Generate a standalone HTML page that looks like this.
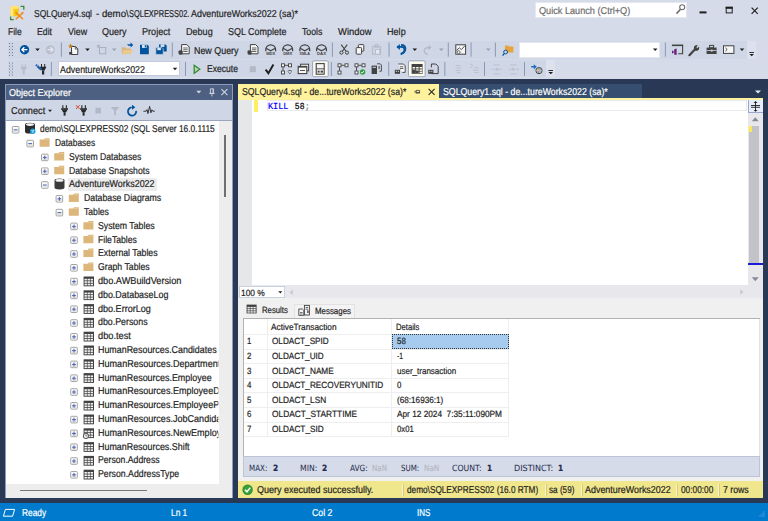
<!DOCTYPE html>
<html lang="en"><head><meta charset="utf-8"><title>SQLQuery4.sql - demo\SQLEXPRESS02.AdventureWorks2022 (sa)* - Microsoft SQL Server Management Studio</title>
<style>
html,body{margin:0;padding:0}
body{width:768px;height:521px;overflow:hidden;background:#293955;position:relative;font-family:"Liberation Sans",sans-serif}
#app{position:absolute;left:0;top:0;width:768px;height:521px;overflow:hidden}
#app div,#app span,#app svg{position:absolute;display:block}
#app span{white-space:pre;line-height:1;transform-origin:0 0;text-rendering:geometricPrecision;-webkit-text-stroke:0.2px}
</style></head>
<body><div id="app">
<div style="left:0px;top:0px;width:768px;height:79px;background:#d6dbe9;"></div>
<div style="left:8px;top:41px;width:739px;height:18px;background:#cfd6e5;"></div>
<div style="left:747px;top:41px;width:9px;height:18px;background:#dde1ee;"></div>
<div style="left:8px;top:60px;width:538px;height:17px;background:#cfd6e5;"></div>
<div style="left:546px;top:60px;width:9px;height:17px;background:#dde1ee;"></div>
<span style="left:34px;top:10px;font-size:10px;color:#1e1e1e;transform:scaleX(0.8483);">SQLQuery4.sql</span>
<span style="left:96px;top:10px;font-size:10px;color:#1e1e1e;transform:scaleX(0.9644);">- demo\</span>
<span style="left:129.4px;top:10px;font-size:10px;color:#1e1e1e;transform:scaleX(0.7442);">SQLEXPRESS02.</span>
<span style="left:190.8px;top:10px;font-size:10px;color:#1e1e1e;transform:scaleX(0.8918);">AdventureWorks2022 (sa)*</span>
<div style="left:535px;top:2px;width:152px;height:16px;background:#fff;box-shadow:inset 0 0 0 1px #e5e8f0"></div>
<span style="left:538.7px;top:7px;font-size:10px;color:#6d6d6d;transform:scaleX(0.9151);">Quick Launch (Ctrl+Q)</span>
<span style="left:8px;top:28px;font-size:10px;color:#1e1e1e;transform:scaleX(0.8496);">File</span>
<span style="left:37px;top:28px;font-size:10px;color:#1e1e1e;transform:scaleX(0.8704);">Edit</span>
<span style="left:67.5px;top:28px;font-size:10px;color:#1e1e1e;transform:scaleX(0.8930);">View</span>
<span style="left:102px;top:28px;font-size:10px;color:#1e1e1e;transform:scaleX(0.8996);">Query</span>
<span style="left:142.2px;top:28px;font-size:10px;color:#1e1e1e;transform:scaleX(0.9092);">Project</span>
<span style="left:185.8px;top:28px;font-size:10px;color:#1e1e1e;transform:scaleX(0.9060);">Debug</span>
<span style="left:228px;top:28px;font-size:10px;color:#1e1e1e;transform:scaleX(0.8970);">SQL Complete</span>
<span style="left:302.3px;top:28px;font-size:10px;color:#1e1e1e;transform:scaleX(0.8733);">Tools</span>
<span style="left:338px;top:28px;font-size:10px;color:#1e1e1e;transform:scaleX(0.9416);">Window</span>
<span style="left:387.3px;top:28px;font-size:10px;color:#1e1e1e;transform:scaleX(0.9087);">Help</span>
<span style="left:193.8px;top:47px;font-size:10px;color:#1e1e1e;transform:scaleX(0.8897);">New Query</span>
<div style="left:58px;top:61px;width:122px;height:15px;background:#fff;box-shadow:inset 0 0 0 1px #c4cbdc"></div>
<span style="left:60.3px;top:66px;font-size:10px;color:#1e1e1e;transform:scaleX(0.8845);">AdventureWorks2022</span>
<span style="left:206.7px;top:65px;font-size:10px;color:#1e1e1e;transform:scaleX(0.8578);">Execute</span>
<div style="left:519px;top:42px;width:141px;height:16px;background:#fff;box-shadow:inset 0 0 0 1px #e5e8f0"></div>
<svg style="left:0;top:0" width="768" height="80" viewBox="0 0 768 80"><path d="M10.4 7.6v7.2a4.2 1.6 0 0 0 8.4 0v-7.2z" fill="#f6c915" /><ellipse cx="14.6" cy="7.4" rx="4.2" ry="1.6" fill="#ffe36a"/><path d="M10.4 7.6v7.2a4.2 1.6 0 0 0 3 1.5v-7.4a4.2 1.6 0 0 1-3-1.3z" fill="#ffe98a" /><path d="M20.6 6.4h3.2v3.4" fill="none" stroke="#388a34" stroke-width="1.3" /><path d="M10.6 16.4v3.2h3.2" fill="none" stroke="#388a34" stroke-width="1.3" /><path d="M15.6 12.4l7.4 6.8M23.2 12.4l-7.4 6.8" fill="none" stroke="#f28a1e" stroke-width="1.5" /><path d="M15 12l2.4 .4-.6 2.2zM23.8 12l-2.4 .4.6 2.2z" fill="#f28a1e" /><rect x="699.5" y="11.4" width="7" height="2" fill="#1e1e1e" /><rect x="726.2" y="7.3" width="6" height="5.6" fill="none" stroke="#1e1e1e" stroke-width="1" /><rect x="725.7" y="6.8" width="7" height="2" fill="#1e1e1e" /><path d="M751.6 7.6l6.2 6.2M757.8 7.6l-6.2 6.2" fill="none" stroke="#1e1e1e" stroke-width="1.2" /><circle cx="682.2" cy="7.3" r="2.5" fill="none" stroke="#6d6d6d" stroke-width="1.1"/><path d="M680.5 9.3l-4 4.3" fill="none" stroke="#6d6d6d" stroke-width="1.6" /><rect x="9" y="43" width="1" height="1" fill="#6f7b99" /><rect x="12" y="43" width="1" height="1" fill="#6f7b99" /><rect x="10.5" y="44.5" width="1" height="1" fill="#aab3c9" /><rect x="9" y="46" width="1" height="1" fill="#6f7b99" /><rect x="12" y="46" width="1" height="1" fill="#6f7b99" /><rect x="10.5" y="47.5" width="1" height="1" fill="#aab3c9" /><rect x="9" y="49" width="1" height="1" fill="#6f7b99" /><rect x="12" y="49" width="1" height="1" fill="#6f7b99" /><rect x="10.5" y="50.5" width="1" height="1" fill="#aab3c9" /><rect x="9" y="52" width="1" height="1" fill="#6f7b99" /><rect x="12" y="52" width="1" height="1" fill="#6f7b99" /><rect x="10.5" y="53.5" width="1" height="1" fill="#aab3c9" /><rect x="9" y="55" width="1" height="1" fill="#6f7b99" /><rect x="12" y="55" width="1" height="1" fill="#6f7b99" /><rect x="9" y="62.6" width="1" height="1" fill="#6f7b99" /><rect x="12" y="62.6" width="1" height="1" fill="#6f7b99" /><rect x="10.5" y="64.1" width="1" height="1" fill="#aab3c9" /><rect x="9" y="65.6" width="1" height="1" fill="#6f7b99" /><rect x="12" y="65.6" width="1" height="1" fill="#6f7b99" /><rect x="10.5" y="67.1" width="1" height="1" fill="#aab3c9" /><rect x="9" y="68.6" width="1" height="1" fill="#6f7b99" /><rect x="12" y="68.6" width="1" height="1" fill="#6f7b99" /><rect x="10.5" y="70.1" width="1" height="1" fill="#aab3c9" /><rect x="9" y="71.6" width="1" height="1" fill="#6f7b99" /><rect x="12" y="71.6" width="1" height="1" fill="#6f7b99" /><rect x="10.5" y="73.1" width="1" height="1" fill="#aab3c9" /><rect x="9" y="74.6" width="1" height="1" fill="#6f7b99" /><rect x="12" y="74.6" width="1" height="1" fill="#6f7b99" /><circle cx="24.5" cy="49.7" r="4.7" fill="#00539c"/><path d="M27.4 49.7h-5.2M24.3 47.3l-2.4 2.4 2.4 2.4" fill="none" stroke="#fff" stroke-width="1.3" /><path d="M35.2 48.5h4.6l-2.3 2.6z" fill="#1e1e1e" /><circle cx="50.3" cy="49.7" r="4.5" fill="#b9bfcc"/><path d="M47.4 49.7h5.2M50.5 47.3l2.4 2.4-2.4 2.4" fill="none" stroke="#e6e9f2" stroke-width="1.3" /><rect x="60.9" y="42.5" width="0.9" height="14.2" fill="#8591ad" /><path d="M71.5 46.5h4l2.3 2.3v5.7h-6.3z" fill="#f6f6f6" stroke="#424242" stroke-width="1" /><path d="M75.3 46.6v2.4h2.4" fill="none" stroke="#424242" stroke-width="0.8" /><path d="M70.6 43.6l.7 1.6 1.7.3-1.3 1.1.4 1.7-1.5-.9-1.5.9.4-1.7-1.3-1.1 1.7-.3z" fill="#c27d1a" /><rect x="69.2" y="52" width="3" height="2.6" fill="#424242" /><path d="M85.2 48.5h4.6l-2.3 2.6z" fill="#1e1e1e" /><rect x="99.5" y="47.5" width="6.3" height="6.3" fill="none" stroke="#a9afbc" stroke-width="1" /><path d="M98.4 44l.6 1.4 1.5.2-1.1 1 .3 1.5-1.3-.8-1.3.8.3-1.5-1.1-1 1.5-.2z" fill="#a9afbc" /><path d="M111.9 48.5h4.6l-2.3 2.6z" fill="#9aa0ae" /><path d="M121.8 54.2v-7h3.2l1 1.2h5v1.6" fill="#dcb67a" /><path d="M121.8 54.2l2-4.2h9l-2 4.2z" fill="#e8c98f" /><path d="M127 44.2h3.6v-1.6l2.6 2.4-2.6 2.4v-1.6h-2.2" fill="#00539c" /><path d="M140 44.7h7.4l1.4 1.4v8.1h-8.8z" fill="#00539c" /><rect x="142" y="44.7" width="4.6" height="3.2" fill="#dbe4f0" /><rect x="144.8" y="45.2" width="1.2" height="2.2" fill="#00539c" /><path d="M159 44.4h6.4l1.3 1.2v6h-7.7z" fill="#00539c" /><rect x="160.6" y="44.4" width="3.8" height="2.5" fill="#dbe4f0" /><path d="M155.8 47.6h6.2l1.2 1.2v5.6h-7.4z" fill="#00539c" stroke="#cfd6e5" stroke-width="0.7" /><rect x="157.3" y="48" width="3.6" height="2.2" fill="#dbe4f0" /><rect x="171.8" y="42.5" width="0.9" height="14.2" fill="#8591ad" /><path d="M181.6 44.6h5.2l2.4 2.4v6.8h-7.6z" fill="#f6f6f6" stroke="#424242" stroke-width="1" /><rect x="183.2" y="47.6" width="4.4" height="0.8" fill="#424242" /><rect x="183.2" y="49.4" width="4.4" height="0.8" fill="#424242" /><rect x="183.2" y="51.2" width="4.4" height="0.8" fill="#424242" /><path d="M178.6 51.2a2 1 0 0 1 4 0v2.6a2 1 0 0 1 -4 0z" fill="#424242" /><path d="M250.4 44.6h5.2l2.4 2.4v6.8h-7.6z" fill="#f6f6f6" stroke="#424242" stroke-width="1" /><rect x="252" y="47.6" width="4.4" height="0.8" fill="#424242" /><rect x="252" y="49.4" width="4.4" height="0.8" fill="#424242" /><rect x="252" y="51.2" width="4.4" height="0.8" fill="#424242" /><path d="M247.6 51.2a2 1 0 0 1 4 0v2.6a2 1 0 0 1 -4 0z" fill="#424242" /><path d="M265.8 51.2v-1.8a4.9 4.6 0 0 1 9.8 0v1.8" fill="none" stroke="#424242" stroke-width="1.25" /><path d="M266.1 48.2l4.6 2.6 4.6-2.6" fill="none" stroke="#424242" stroke-width="1.1" /><text x="270.7" y="54.8" font-size="4" font-weight="700" text-anchor="middle" fill="#424242" font-family="Liberation Sans, sans-serif" textLength="9" lengthAdjust="spacingAndGlyphs">MDX</text><path d="M282.8 51.2v-1.8a4.9 4.6 0 0 1 9.8 0v1.8" fill="none" stroke="#424242" stroke-width="1.25" /><path d="M283.1 48.2l4.6 2.6 4.6-2.6" fill="none" stroke="#424242" stroke-width="1.1" /><text x="287.7" y="54.8" font-size="4" font-weight="700" text-anchor="middle" fill="#424242" font-family="Liberation Sans, sans-serif" textLength="9" lengthAdjust="spacingAndGlyphs">DMX</text><path d="M299.9 51.2v-1.8a4.9 4.6 0 0 1 9.8 0v1.8" fill="none" stroke="#424242" stroke-width="1.25" /><path d="M300.2 48.2l4.6 2.6 4.6-2.6" fill="none" stroke="#424242" stroke-width="1.1" /><text x="304.8" y="54.8" font-size="4" font-weight="700" text-anchor="middle" fill="#424242" font-family="Liberation Sans, sans-serif" textLength="10.4" lengthAdjust="spacingAndGlyphs">XMLA</text><path d="M316.6 51.2v-1.8a4.9 4.6 0 0 1 9.8 0v1.8" fill="none" stroke="#424242" stroke-width="1.25" /><path d="M316.9 48.2l4.6 2.6 4.6-2.6" fill="none" stroke="#424242" stroke-width="1.1" /><text x="321.5" y="54.8" font-size="4" font-weight="700" text-anchor="middle" fill="#424242" font-family="Liberation Sans, sans-serif" textLength="9" lengthAdjust="spacingAndGlyphs">DAX</text><rect x="331.9" y="42.5" width="0.9" height="14.2" fill="#8591ad" /><path d="M341.2 44.6l4.8 6.6M347.2 44.6l-4.8 6.6" fill="none" stroke="#424242" stroke-width="1.1" /><circle cx="341.4" cy="52.6" r="1.6" fill="none" stroke="#424242" stroke-width="1"/><circle cx="347" cy="52.6" r="1.6" fill="none" stroke="#424242" stroke-width="1"/><rect x="358.4" y="44.6" width="5.4" height="6.6" fill="#f6f6f6" stroke="#424242" stroke-width="1" rx="0.8" /><rect x="356.2" y="47.6" width="5.4" height="6.6" fill="#f6f6f6" stroke="#424242" stroke-width="1" rx="0.8" /><rect x="372.6" y="46.6" width="8" height="7.6" fill="none" stroke="#b4b9c6" stroke-width="1" /><rect x="375" y="44.8" width="3.2" height="2.4" fill="none" stroke="#b4b9c6" stroke-width="1" /><rect x="375.6" y="49.4" width="4.2" height="4.8" fill="#e4e7f0" stroke="#b4b9c6" stroke-width="0.8" /><rect x="388.6" y="42.5" width="0.9" height="14.2" fill="#8591ad" /><path d="M397.2 46.8h4.2a3.2 3.2 0 0 1 0 6.4 M402 53.2c1.8-.4 2.6-2 2.4-3.6" fill="none" stroke="#00539c" stroke-width="1.7" /><path d="M396.4 46.9l3.4-3v6z" fill="#00539c" /><path d="M401 44.8c3 0 4.6 1.8 4.4 4.2-.2 2.4-2 4.2-4.8 5.4" fill="none" stroke="#00539c" stroke-width="1.8" /><path d="M412.5 48.5h4.6l-2.3 2.6z" fill="#1e1e1e" /><path d="M431.6 47.6l-3.2-2.6v5.2z" fill="#b4b9c6" /><path d="M428.6 47.6c-3-.2-4.6 1.4-4.4 3.4.2 1.8 1.6 3 3.6 3.6" fill="none" stroke="#b4b9c6" stroke-width="1.4" /><path d="M439 48.5h4.6l-2.3 2.6z" fill="#9aa0ae" /><rect x="447.8" y="42.5" width="0.9" height="14.2" fill="#8591ad" /><rect x="455.8" y="44.8" width="9.8" height="9.4" fill="#f6f6f6" stroke="#424242" stroke-width="1" /><path d="M456.4 50.4l3-2.6 2 1.8 3.6-4" fill="none" stroke="#424242" stroke-width="0.9" /><circle cx="458.6" cy="52.2" r="1.5" fill="#f6f6f6" stroke="#424242" stroke-width="0.8"/><rect x="470.6" y="42.5" width="0.9" height="14.2" fill="#8591ad" /><path d="M486 48.5h4.6l-2.3 2.6z" fill="#9aa0ae" /><rect x="494.9" y="42.5" width="0.9" height="14.2" fill="#8591ad" /><path d="M505 52.4v-7h3l1 1h4.4v6z" fill="#e8a33d" /><circle cx="505.6" cy="52" r="1.9" fill="#cfd6e5" stroke="#00539c" stroke-width="1"/><path d="M504.2 53.6l-1.6 2" fill="none" stroke="#00539c" stroke-width="1.3" /><path d="M652.9 48.5h4.6l-2.3 2.6z" fill="#1e1e1e" /><rect x="664.9" y="42.5" width="0.9" height="14.2" fill="#8591ad" /><path d="M672.4 45.2h10.2v8.6h-4.4" fill="none" stroke="#424242" stroke-width="1.1" /><rect x="671.9" y="44.7" width="11.2" height="1.4" fill="#424242" /><path d="M672 50.2l2.2 1.8-2.2 1.8zM676.6 48.6v6.4l-2.4-.6v-5.2z" fill="#68217a" /><path d="M689.4 55.2l5.2-5.4" fill="none" stroke="#424242" stroke-width="2.2" stroke-linecap="round"/><path d="M694.4 50.2a3 3 0 0 1 3.2-4.6l-1.8 1.9 1.4 1.5 1.9-1.8a3 3 0 0 1-4.7 3z" fill="#424242" /><circle cx="696.6" cy="47.8" r="2.6" fill="#424242"/><path d="M696.8 47.6l2.6-2.6" fill="none" stroke="#cfd6e5" stroke-width="1.6" /><rect x="706.6" y="47.6" width="10" height="6.4" fill="#424242" /><rect x="709.6" y="45.4" width="4" height="2.4" fill="none" stroke="#424242" stroke-width="1" /><rect x="706.6" y="50.2" width="10" height="0.8" fill="#cfd6e5" /><rect x="710.8" y="49.6" width="1.8" height="2" fill="#cfd6e5" /><rect x="723.5" y="45.8" width="10.4" height="7.6" fill="#f6f6f6" stroke="#424242" stroke-width="1" /><path d="M725.4 47.8l1.8 1.7-1.8 1.7" fill="none" stroke="#424242" stroke-width="0.9" /><path d="M739.7 48.5h4.6l-2.3 2.6z" fill="#1e1e1e" /><rect x="749.4" y="52" width="4.6" height="0.9" fill="#1e1e1e" /><path d="M749.4 54.1h4.6l-2.3 2.2z" fill="#1e1e1e" /><rect x="548.4" y="70" width="4.6" height="0.9" fill="#1e1e1e" /><path d="M548.4 72.1h4.6l-2.3 2.2z" fill="#1e1e1e" /><rect x="21.6" y="64" width="1" height="2.9" fill="#b9bdca" /><rect x="24.8" y="64" width="1" height="2.9" fill="#b9bdca" /><rect x="20.7" y="66.7" width="6" height="1.5" fill="#b9bdca" /><path d="M21.2 68.1h5l-1 2.5h-3z" fill="#b9bdca" /><rect x="22.8" y="70.5" width="1.8" height="4" fill="#b9bdca" /><rect x="41" y="64" width="1" height="2.9" fill="#262626" /><rect x="44.2" y="64" width="1" height="2.9" fill="#262626" /><rect x="40.1" y="66.7" width="6" height="1.5" fill="#262626" /><path d="M40.6 68.1h5l-1 2.5h-3z" fill="#262626" /><rect x="42" y="70.5" width="2.2" height="4" fill="#262626" /><path d="M36 64.8l5.2 5" fill="none" stroke="#1b5fae" stroke-width="2.2" stroke-dasharray="1.4 0.5 10"/><rect x="50.9" y="62" width="0.9" height="14" fill="#8591ad" /><path d="M172.7 67.7h4.6l-2.3 2.6z" fill="#1e1e1e" /><rect x="185.1" y="62" width="0.9" height="14" fill="#8591ad" /><path d="M194.2 65.2l5.6 4-5.6 4z" fill="#b9d3b4" stroke="#388a34" stroke-width="1.3" /><rect x="249.8" y="66.2" width="6" height="6" fill="#b4b9c6" /><path d="M265.6 69.6l2.8 3.6 5-8.6" fill="none" stroke="#1e1e1e" stroke-width="1.9" /><rect x="281.5" y="63.8" width="3" height="3" fill="#f6f6f6" stroke="#424242" stroke-width="0.9" /><rect x="288.5" y="63.8" width="3" height="3" fill="#f6f6f6" stroke="#424242" stroke-width="0.9" /><rect x="281.5" y="71" width="3" height="3" fill="#f6f6f6" stroke="#424242" stroke-width="0.9" /><path d="M284.7 65.3h3.6M283 67v3.8" fill="none" stroke="#424242" stroke-width="0.9" /><path d="M287.6 71.2q2.2 -1.6 4.4 0M288.4 72.4l1.4 1.3 1.4-1.3" fill="none" stroke="#424242" stroke-width="0.8" /><rect x="300.6" y="64.2" width="8" height="6.6" fill="#f6f6f6" stroke="#424242" stroke-width="1" /><rect x="298.2" y="66.4" width="8.6" height="7.2" fill="#f6f6f6" stroke="#424242" stroke-width="1.1" /><rect x="298.2" y="66.2" width="8.6" height="1.4" fill="#424242" /><rect x="300" y="70" width="5" height="0.9" fill="#424242" /><rect x="312.6" y="60.8" width="15.6" height="15.9" fill="#fdfbec" stroke="#8e9bbc" stroke-width="0.9" rx="1" /><rect x="316.2" y="63.6" width="8" height="10.6" fill="#f6f6f6" stroke="#424242" stroke-width="1.1" /><rect x="316.2" y="68.4" width="8" height="0.9" fill="#424242" /><rect x="317.6" y="70.6" width="2" height="2" fill="#424242" /><rect x="320.6" y="70.6" width="2.4" height="2" fill="#424242" /><rect x="330.9" y="62" width="0.9" height="14" fill="#8591ad" /><rect x="338" y="63.8" width="3" height="3" fill="#f6f6f6" stroke="#424242" stroke-width="0.9" /><rect x="345" y="63.8" width="3" height="3" fill="#f6f6f6" stroke="#424242" stroke-width="0.9" /><rect x="338" y="71" width="3" height="3" fill="#f6f6f6" stroke="#424242" stroke-width="0.9" /><path d="M341.2 65.3h3.6M339.5 67v3.8" fill="none" stroke="#424242" stroke-width="0.9" /><rect x="355" y="63.8" width="3" height="3" fill="#f6f6f6" stroke="#424242" stroke-width="0.9" /><rect x="362" y="63.8" width="3" height="3" fill="#f6f6f6" stroke="#424242" stroke-width="0.9" /><rect x="355" y="71" width="3" height="3" fill="#f6f6f6" stroke="#424242" stroke-width="0.9" /><path d="M358.2 65.3h3.6M356.5 67v3.8" fill="none" stroke="#424242" stroke-width="0.9" /><circle cx="362.6" cy="72" r="2.7" fill="#2ea043"/><path d="M361.2 72l1 1.1 1.8-2.1" fill="none" stroke="#fff" stroke-width="0.9" /><rect x="371.6" y="65.6" width="5.4" height="8.4" fill="#424242" /><rect x="372.6" y="66.8" width="3.4" height="1" fill="#cfd6e5" /><path d="M377 63.8h3.2l1.2 1.2v6.2h-2" fill="none" stroke="#424242" stroke-width="0.9" /><rect x="378.6" y="66" width="1" height="3" fill="#424242" /><rect x="388.3" y="62" width="0.9" height="14" fill="#8591ad" /><path d="M398.4 64h5l1.8 1.8v6.6h-3" fill="#f6f6f6" stroke="#424242" stroke-width="0.9" /><rect x="400" y="66.4" width="3.4" height="0.8" fill="#424242" /><rect x="400" y="68.2" width="3.4" height="0.8" fill="#424242" /><rect x="394.8" y="69.8" width="5.2" height="4" fill="#424242" /><rect x="395.8" y="70.8" width="1.2" height="1" fill="#cfd6e5" /><rect x="397.8" y="70.8" width="1.2" height="1" fill="#cfd6e5" /><rect x="408.5" y="60.8" width="16.6" height="15.9" fill="#fdfbec" stroke="#8e9bbc" stroke-width="0.9" rx="1" /><rect x="411.6" y="64" width="11" height="9.8" fill="#424242" /><rect x="412.6" y="67" width="2.6" height="1.5" fill="#fdfbec" /><rect x="412.6" y="69.4" width="2.6" height="1.5" fill="#fdfbec" /><rect x="412.6" y="71.6" width="2.6" height="1.5" fill="#fdfbec" /><rect x="416.1" y="67" width="2.6" height="1.5" fill="#fdfbec" /><rect x="416.1" y="69.4" width="2.6" height="1.5" fill="#fdfbec" /><rect x="416.1" y="71.6" width="2.6" height="1.5" fill="#fdfbec" /><rect x="419.6" y="67" width="2.6" height="1.5" fill="#fdfbec" /><rect x="419.6" y="69.4" width="2.6" height="1.5" fill="#fdfbec" /><rect x="419.6" y="71.6" width="2.6" height="1.5" fill="#fdfbec" /><rect x="412.2" y="69.8" width="3" height="3.4" fill="#424242" /><rect x="416" y="70.6" width="2.6" height="2.4" fill="#424242" /><path d="M431.6 73.6h6.6v-7.2l-2.4-2.4h-4.4v3.4" fill="none" stroke="#424242" stroke-width="1" /><rect x="428.2" y="69.8" width="5.2" height="4" fill="#424242" /><rect x="429.2" y="70.8" width="1.2" height="1" fill="#cfd6e5" /><rect x="431.2" y="70.8" width="1.2" height="1" fill="#cfd6e5" /><rect x="444.4" y="62" width="0.9" height="14" fill="#8591ad" /><rect x="455.6" y="65" width="5" height="0.9" fill="#b9bdca" /><rect x="456.6" y="67.4" width="4" height="0.9" fill="#b9bdca" /><rect x="455.6" y="69.8" width="5" height="0.9" fill="#b9bdca" /><rect x="456.6" y="72.2" width="4" height="0.9" fill="#b9bdca" /><rect x="474" y="67.4" width="4.6" height="0.9" fill="#b9bdca" /><rect x="473" y="69.8" width="5.6" height="0.9" fill="#b9bdca" /><rect x="474" y="72.2" width="4.6" height="0.9" fill="#b9bdca" /><path d="M470 64.2q2.4-.6 2.4 1.4t-2 1.6" fill="none" stroke="#b9bdca" stroke-width="0.9" /><rect x="484.1" y="62" width="0.9" height="14" fill="#8591ad" /><rect x="493.6" y="64.4" width="6" height="0.9" fill="#b9bdca" /><rect x="493.6" y="73.4" width="6" height="0.9" fill="#b9bdca" /><rect x="510.6" y="64.4" width="6" height="0.9" fill="#b9bdca" /><rect x="510.6" y="73.4" width="6" height="0.9" fill="#b9bdca" /><rect x="491.6" y="68.8" width="3" height="0.9" fill="#b9bdca" /><rect x="497.6" y="68.8" width="4" height="0.9" fill="#b9bdca" /><path d="M495 69.2l2.6-2v4z" fill="#b9bdca" /><rect x="508.6" y="68.8" width="4" height="0.9" fill="#b9bdca" /><rect x="515.6" y="68.8" width="3" height="0.9" fill="#b9bdca" /><path d="M515.2 69.2l-2.6-2v4z" fill="#b9bdca" /><rect x="524.1" y="62" width="0.9" height="14" fill="#8591ad" /><path d="M531.2 66h2.6v-1.8l3 2.6-3 2.6v-1.8h-2.6z" fill="#1b6ec2" /><circle cx="539" cy="70.6" r="3.1" fill="#f6f6f6" stroke="#424242" stroke-width="1"/><text x="539" y="72.4" font-size="4.6" text-anchor="middle" fill="#424242" font-family="Liberation Sans, sans-serif">@</text></svg>
<div style="left:5px;top:84px;width:228px;height:414px;background:#8e9bbc;"></div>
<div style="left:6px;top:85px;width:226px;height:15px;background:#4d6082;"></div>
<span style="left:8.7px;top:89px;font-size:10px;color:#fff;transform:scaleX(0.9010);">Object Explorer</span>
<div style="left:6px;top:100px;width:226px;height:20px;background:#cfd6e5;"></div>
<span style="left:10.8px;top:107px;font-size:10px;color:#1e1e1e;transform:scaleX(0.9181);">Connect</span>
<div style="left:6px;top:120px;width:213px;height:364px;background:#fff;"></div>
<div style="left:219px;top:120px;width:13px;height:364px;background:#ededed;"></div>
<div style="left:6px;top:120px;width:226px;height:1px;background:#9aa4bd;"></div>
<div style="left:224px;top:135px;width:2px;height:62px;background:#6f6f6f;"></div>
<div style="left:6px;top:484px;width:226px;height:14px;background:#ededed;"></div>
<div style="left:20px;top:490px;width:127px;height:1px;background:#777;"></div>
<div style="left:68px;top:178px;width:89px;height:13px;background:#ececec;"></div>
<span style="left:40px;top:125px;font-size:10px;color:#1e1e1e;transform:scaleX(0.8322);">demo\SQLEXPRESS02 (SQL Server 16.0.1115</span>
<span style="left:54.6px;top:139px;font-size:10px;color:#1e1e1e;transform:scaleX(0.8387);">Databases</span>
<span style="left:69.2px;top:153px;font-size:10px;color:#1e1e1e;transform:scaleX(0.8614);">System Databases</span>
<span style="left:69.2px;top:167px;font-size:10px;color:#1e1e1e;transform:scaleX(0.8670);">Database Snapshots</span>
<span style="left:69.2px;top:180px;font-size:10px;color:#1e1e1e;transform:scaleX(0.8908);">AdventureWorks2022</span>
<span style="left:83.8px;top:194px;font-size:10px;color:#1e1e1e;transform:scaleX(0.8736);">Database Diagrams</span>
<span style="left:83.8px;top:208px;font-size:10px;color:#1e1e1e;transform:scaleX(0.8614);">Tables</span>
<span style="left:98.4px;top:222px;font-size:10px;color:#1e1e1e;transform:scaleX(0.8729);">System Tables</span>
<span style="left:98.4px;top:236px;font-size:10px;color:#1e1e1e;transform:scaleX(0.8638);">FileTables</span>
<span style="left:98.4px;top:249px;font-size:10px;color:#1e1e1e;transform:scaleX(0.8739);">External Tables</span>
<span style="left:98.4px;top:263px;font-size:10px;color:#1e1e1e;transform:scaleX(0.8702);">Graph Tables</span>
<span style="left:98.4px;top:277px;font-size:10px;color:#1e1e1e;transform:scaleX(0.9180);">dbo.AWBuildVersion</span>
<span style="left:98.4px;top:291px;font-size:10px;color:#1e1e1e;transform:scaleX(0.8909);">dbo.DatabaseLog</span>
<span style="left:98.4px;top:305px;font-size:10px;color:#1e1e1e;transform:scaleX(0.9054);">dbo.ErrorLog</span>
<span style="left:98.4px;top:318px;font-size:10px;color:#1e1e1e;transform:scaleX(0.8832);">dbo.Persons</span>
<span style="left:98.4px;top:332px;font-size:10px;color:#1e1e1e;transform:scaleX(0.9229);">dbo.test</span>
<span style="left:98.4px;top:346px;font-size:10px;color:#1e1e1e;transform:scaleX(0.8890);">HumanResources.Candidates</span>
<span style="left:98.4px;top:360px;font-size:10px;color:#1e1e1e;transform:scaleX(0.9050);width:133.0px;overflow:hidden;">HumanResources.Department</span>
<span style="left:98.4px;top:374px;font-size:10px;color:#1e1e1e;transform:scaleX(0.8925);">HumanResources.Employee</span>
<span style="left:98.4px;top:387px;font-size:10px;color:#1e1e1e;transform:scaleX(0.9050);width:133.0px;overflow:hidden;">HumanResources.EmployeeDepartmentHistory</span>
<span style="left:98.4px;top:401px;font-size:10px;color:#1e1e1e;transform:scaleX(0.9050);width:133.0px;overflow:hidden;">HumanResources.EmployeePayHistory</span>
<span style="left:98.4px;top:415px;font-size:10px;color:#1e1e1e;transform:scaleX(0.9050);width:133.0px;overflow:hidden;">HumanResources.JobCandidate</span>
<span style="left:98.4px;top:429px;font-size:10px;color:#1e1e1e;transform:scaleX(0.9050);width:133.0px;overflow:hidden;">HumanResources.NewEmployees</span>
<span style="left:98.4px;top:443px;font-size:10px;color:#1e1e1e;transform:scaleX(0.8908);">HumanResources.Shift</span>
<span style="left:98.4px;top:456px;font-size:10px;color:#1e1e1e;transform:scaleX(0.8657);">Person.Address</span>
<span style="left:98.4px;top:470px;font-size:10px;color:#1e1e1e;transform:scaleX(0.8737);">Person.AddressType</span>
<svg style="left:0;top:80px" width="236" height="420" viewBox="0 80 236 420"><path d="M196.3 90.8h5l-2.5 2.8z" fill="#d0d6e4" /><path d="M210.4 88.8h3v4.6h-3zM209.2 93.4h5.4M211.9 93.4v3" fill="none" stroke="#d0d6e4" stroke-width="0.9" /><rect x="212.6" y="88.8" width="0.9" height="4.6" fill="#d0d6e4" /><path d="M221.4 89.2l6 6M227.4 89.2l-6 6" fill="none" stroke="#d0d6e4" stroke-width="1.1" /><path d="M48 109.7h4l-2 2.4z" fill="#1e1e1e" /><rect x="62.3" y="105.2" width="1.1" height="3.2" fill="#262626" /><rect x="65.8" y="105.2" width="1.1" height="3.2" fill="#262626" /><rect x="61.2" y="108.2" width="6.8" height="1.6" fill="#262626" /><path d="M61.8 109.7h5.6l-1.2 2.6h-3.2z" fill="#262626" /><rect x="63.6" y="112.2" width="2" height="3.4" fill="#262626" /><rect x="81.3" y="105.2" width="1.1" height="3.2" fill="#262626" /><rect x="84.8" y="105.2" width="1.1" height="3.2" fill="#262626" /><rect x="80.2" y="108.2" width="6.8" height="1.6" fill="#262626" /><path d="M80.8 109.7h5.6l-1.2 2.6h-3.2z" fill="#262626" /><rect x="82.6" y="112.2" width="2" height="3.4" fill="#262626" /><path d="M76 105.2l3.6 3.8M79.6 105.2l-3.6 3.8" fill="none" stroke="#d9442f" stroke-width="1" /><rect x="95.4" y="107.8" width="5.6" height="5.6" fill="#b4b9c6" /><path d="M110.6 107h9l-3.6 3.8v4.2h-1.8v-4.2z" fill="#b4b9c6" /><path d="M136.1 110.8A4.1 4.1 0 1 1 131.7 107.4" fill="none" stroke="#00539c" stroke-width="1.7" /><path d="M132 104.8l3.4 2.5-3.4 2.4z" fill="#00539c" /><path d="M143.4 111.2h2.8l.9 -1.6.9 4 1.6-7.2 1.3 6.4 1-3 .9 1.4h2" fill="none" stroke="#262626" stroke-width="0.9" /><rect x="12.3" y="126.5" width="6.6" height="6.6" fill="#fafafa" stroke="#9a9a9a" stroke-width="0.9" rx="0.8" /><rect x="13.2" y="130.4" width="4.8" height="1.9" fill="#e2e2e2" /><rect x="13.7" y="129.3" width="3.8" height="1" fill="#4a62b0" /><path d="M25 124.7a5 1.9 0 0 1 10 0v7a5 1.9 0 0 1-10 0z" fill="#2d2d2d" /><ellipse cx="30" cy="124.6" rx="4" ry="1.3" fill="#f4f4f4"/><circle cx="32.8" cy="131.2" r="2.7" fill="#1ba1e2"/><path d="M31.6 130l1.2 1.3 1.2-1.3M32.8 131.3v1.5" fill="none" stroke="#fff" stroke-width="0.7" /><rect x="26.9" y="140.3" width="6.6" height="6.6" fill="#fafafa" stroke="#9a9a9a" stroke-width="0.9" rx="0.8" /><rect x="27.8" y="144.2" width="4.8" height="1.9" fill="#e2e2e2" /><rect x="28.3" y="143.1" width="3.8" height="1" fill="#4a62b0" /><path d="M39.6 146.7v-7.2h4.4l.8-1.3h4.8v8.5z" fill="#dcb67a" /><rect x="44.8" y="139.2" width="4.2" height="0.7" fill="#ecd3a6" /><rect x="41.5" y="154.1" width="6.6" height="6.6" fill="#fafafa" stroke="#9a9a9a" stroke-width="0.9" rx="0.8" /><rect x="42.4" y="158" width="4.8" height="1.9" fill="#e2e2e2" /><rect x="42.9" y="156.9" width="3.8" height="1" fill="#4a62b0" /><rect x="44.3" y="155.5" width="1" height="3.8" fill="#4a62b0" /><path d="M54.2 160.5v-7.2h4.4l.8-1.3h4.8v8.5z" fill="#dcb67a" /><rect x="59.4" y="153" width="4.2" height="0.7" fill="#ecd3a6" /><rect x="41.5" y="167.9" width="6.6" height="6.6" fill="#fafafa" stroke="#9a9a9a" stroke-width="0.9" rx="0.8" /><rect x="42.4" y="171.8" width="4.8" height="1.9" fill="#e2e2e2" /><rect x="42.9" y="170.7" width="3.8" height="1" fill="#4a62b0" /><rect x="44.3" y="169.3" width="1" height="3.8" fill="#4a62b0" /><path d="M54.2 174.3v-7.2h4.4l.8-1.3h4.8v8.5z" fill="#dcb67a" /><rect x="59.4" y="166.8" width="4.2" height="0.7" fill="#ecd3a6" /><rect x="41.5" y="181.7" width="6.6" height="6.6" fill="#fafafa" stroke="#9a9a9a" stroke-width="0.9" rx="0.8" /><rect x="42.4" y="185.6" width="4.8" height="1.9" fill="#e2e2e2" /><rect x="42.9" y="184.5" width="3.8" height="1" fill="#4a62b0" /><path d="M54.5 180.5a5 1.9 0 0 1 10 0v7a5 1.9 0 0 1-10 0z" fill="#3a3a3a" /><ellipse cx="59.5" cy="180.4" rx="4" ry="1.3" fill="#f4f4f4"/><rect x="56.1" y="195.5" width="6.6" height="6.6" fill="#fafafa" stroke="#9a9a9a" stroke-width="0.9" rx="0.8" /><rect x="57" y="199.4" width="4.8" height="1.9" fill="#e2e2e2" /><rect x="57.5" y="198.3" width="3.8" height="1" fill="#4a62b0" /><rect x="58.9" y="196.9" width="1" height="3.8" fill="#4a62b0" /><path d="M68.8 201.9v-7.2h4.4l.8-1.3h4.8v8.5z" fill="#dcb67a" /><rect x="74" y="194.4" width="4.2" height="0.7" fill="#ecd3a6" /><rect x="56.1" y="209.3" width="6.6" height="6.6" fill="#fafafa" stroke="#9a9a9a" stroke-width="0.9" rx="0.8" /><rect x="57" y="213.2" width="4.8" height="1.9" fill="#e2e2e2" /><rect x="57.5" y="212.1" width="3.8" height="1" fill="#4a62b0" /><path d="M68.8 215.7v-7.2h4.4l.8-1.3h4.8v8.5z" fill="#dcb67a" /><rect x="74" y="208.2" width="4.2" height="0.7" fill="#ecd3a6" /><rect x="70.7" y="223.1" width="6.6" height="6.6" fill="#fafafa" stroke="#9a9a9a" stroke-width="0.9" rx="0.8" /><rect x="71.6" y="227" width="4.8" height="1.9" fill="#e2e2e2" /><rect x="72.1" y="225.9" width="3.8" height="1" fill="#4a62b0" /><rect x="73.5" y="224.5" width="1" height="3.8" fill="#4a62b0" /><path d="M83.4 229.5v-7.2h4.4l.8-1.3h4.8v8.5z" fill="#dcb67a" /><rect x="88.6" y="222" width="4.2" height="0.7" fill="#ecd3a6" /><rect x="70.7" y="236.9" width="6.6" height="6.6" fill="#fafafa" stroke="#9a9a9a" stroke-width="0.9" rx="0.8" /><rect x="71.6" y="240.8" width="4.8" height="1.9" fill="#e2e2e2" /><rect x="72.1" y="239.7" width="3.8" height="1" fill="#4a62b0" /><rect x="73.5" y="238.3" width="1" height="3.8" fill="#4a62b0" /><path d="M83.4 243.3v-7.2h4.4l.8-1.3h4.8v8.5z" fill="#dcb67a" /><rect x="88.6" y="235.8" width="4.2" height="0.7" fill="#ecd3a6" /><rect x="70.7" y="250.7" width="6.6" height="6.6" fill="#fafafa" stroke="#9a9a9a" stroke-width="0.9" rx="0.8" /><rect x="71.6" y="254.6" width="4.8" height="1.9" fill="#e2e2e2" /><rect x="72.1" y="253.5" width="3.8" height="1" fill="#4a62b0" /><rect x="73.5" y="252.1" width="1" height="3.8" fill="#4a62b0" /><path d="M83.4 257.1v-7.2h4.4l.8-1.3h4.8v8.5z" fill="#dcb67a" /><rect x="88.6" y="249.6" width="4.2" height="0.7" fill="#ecd3a6" /><rect x="70.7" y="264.5" width="6.6" height="6.6" fill="#fafafa" stroke="#9a9a9a" stroke-width="0.9" rx="0.8" /><rect x="71.6" y="268.4" width="4.8" height="1.9" fill="#e2e2e2" /><rect x="72.1" y="267.3" width="3.8" height="1" fill="#4a62b0" /><rect x="73.5" y="265.9" width="1" height="3.8" fill="#4a62b0" /><path d="M83.4 270.9v-7.2h4.4l.8-1.3h4.8v8.5z" fill="#dcb67a" /><rect x="88.6" y="263.4" width="4.2" height="0.7" fill="#ecd3a6" /><rect x="70.7" y="278.3" width="6.6" height="6.6" fill="#fafafa" stroke="#9a9a9a" stroke-width="0.9" rx="0.8" /><rect x="71.6" y="282.2" width="4.8" height="1.9" fill="#e2e2e2" /><rect x="72.1" y="281.1" width="3.8" height="1" fill="#4a62b0" /><rect x="73.5" y="279.7" width="1" height="3.8" fill="#4a62b0" /><rect x="83.6" y="276.5" width="10.4" height="9.8" fill="#424242" /><rect x="84.5" y="278.8" width="2.4" height="1.65" fill="#f2f2f2" /><rect x="87.55" y="278.8" width="2.4" height="1.65" fill="#f2f2f2" /><rect x="90.6" y="278.8" width="2.4" height="1.65" fill="#f2f2f2" /><rect x="84.5" y="281.25" width="2.4" height="1.65" fill="#f2f2f2" /><rect x="87.55" y="281.25" width="2.4" height="1.65" fill="#f2f2f2" /><rect x="90.6" y="281.25" width="2.4" height="1.65" fill="#f2f2f2" /><rect x="84.5" y="283.7" width="2.4" height="1.65" fill="#f2f2f2" /><rect x="87.55" y="283.7" width="2.4" height="1.65" fill="#f2f2f2" /><rect x="90.6" y="283.7" width="2.4" height="1.65" fill="#f2f2f2" /><rect x="70.7" y="292.1" width="6.6" height="6.6" fill="#fafafa" stroke="#9a9a9a" stroke-width="0.9" rx="0.8" /><rect x="71.6" y="296" width="4.8" height="1.9" fill="#e2e2e2" /><rect x="72.1" y="294.9" width="3.8" height="1" fill="#4a62b0" /><rect x="73.5" y="293.5" width="1" height="3.8" fill="#4a62b0" /><rect x="83.6" y="290.3" width="10.4" height="9.8" fill="#424242" /><rect x="84.5" y="292.6" width="2.4" height="1.65" fill="#f2f2f2" /><rect x="87.55" y="292.6" width="2.4" height="1.65" fill="#f2f2f2" /><rect x="90.6" y="292.6" width="2.4" height="1.65" fill="#f2f2f2" /><rect x="84.5" y="295.05" width="2.4" height="1.65" fill="#f2f2f2" /><rect x="87.55" y="295.05" width="2.4" height="1.65" fill="#f2f2f2" /><rect x="90.6" y="295.05" width="2.4" height="1.65" fill="#f2f2f2" /><rect x="84.5" y="297.5" width="2.4" height="1.65" fill="#f2f2f2" /><rect x="87.55" y="297.5" width="2.4" height="1.65" fill="#f2f2f2" /><rect x="90.6" y="297.5" width="2.4" height="1.65" fill="#f2f2f2" /><rect x="70.7" y="305.9" width="6.6" height="6.6" fill="#fafafa" stroke="#9a9a9a" stroke-width="0.9" rx="0.8" /><rect x="71.6" y="309.8" width="4.8" height="1.9" fill="#e2e2e2" /><rect x="72.1" y="308.7" width="3.8" height="1" fill="#4a62b0" /><rect x="73.5" y="307.3" width="1" height="3.8" fill="#4a62b0" /><rect x="83.6" y="304.1" width="10.4" height="9.8" fill="#424242" /><rect x="84.5" y="306.4" width="2.4" height="1.65" fill="#f2f2f2" /><rect x="87.55" y="306.4" width="2.4" height="1.65" fill="#f2f2f2" /><rect x="90.6" y="306.4" width="2.4" height="1.65" fill="#f2f2f2" /><rect x="84.5" y="308.85" width="2.4" height="1.65" fill="#f2f2f2" /><rect x="87.55" y="308.85" width="2.4" height="1.65" fill="#f2f2f2" /><rect x="90.6" y="308.85" width="2.4" height="1.65" fill="#f2f2f2" /><rect x="84.5" y="311.3" width="2.4" height="1.65" fill="#f2f2f2" /><rect x="87.55" y="311.3" width="2.4" height="1.65" fill="#f2f2f2" /><rect x="90.6" y="311.3" width="2.4" height="1.65" fill="#f2f2f2" /><rect x="70.7" y="319.7" width="6.6" height="6.6" fill="#fafafa" stroke="#9a9a9a" stroke-width="0.9" rx="0.8" /><rect x="71.6" y="323.6" width="4.8" height="1.9" fill="#e2e2e2" /><rect x="72.1" y="322.5" width="3.8" height="1" fill="#4a62b0" /><rect x="73.5" y="321.1" width="1" height="3.8" fill="#4a62b0" /><rect x="83.6" y="317.9" width="10.4" height="9.8" fill="#424242" /><rect x="84.5" y="320.2" width="2.4" height="1.65" fill="#f2f2f2" /><rect x="87.55" y="320.2" width="2.4" height="1.65" fill="#f2f2f2" /><rect x="90.6" y="320.2" width="2.4" height="1.65" fill="#f2f2f2" /><rect x="84.5" y="322.65" width="2.4" height="1.65" fill="#f2f2f2" /><rect x="87.55" y="322.65" width="2.4" height="1.65" fill="#f2f2f2" /><rect x="90.6" y="322.65" width="2.4" height="1.65" fill="#f2f2f2" /><rect x="84.5" y="325.1" width="2.4" height="1.65" fill="#f2f2f2" /><rect x="87.55" y="325.1" width="2.4" height="1.65" fill="#f2f2f2" /><rect x="90.6" y="325.1" width="2.4" height="1.65" fill="#f2f2f2" /><rect x="70.7" y="333.5" width="6.6" height="6.6" fill="#fafafa" stroke="#9a9a9a" stroke-width="0.9" rx="0.8" /><rect x="71.6" y="337.4" width="4.8" height="1.9" fill="#e2e2e2" /><rect x="72.1" y="336.3" width="3.8" height="1" fill="#4a62b0" /><rect x="73.5" y="334.9" width="1" height="3.8" fill="#4a62b0" /><rect x="83.6" y="331.7" width="10.4" height="9.8" fill="#424242" /><rect x="84.5" y="334" width="2.4" height="1.65" fill="#f2f2f2" /><rect x="87.55" y="334" width="2.4" height="1.65" fill="#f2f2f2" /><rect x="90.6" y="334" width="2.4" height="1.65" fill="#f2f2f2" /><rect x="84.5" y="336.45" width="2.4" height="1.65" fill="#f2f2f2" /><rect x="87.55" y="336.45" width="2.4" height="1.65" fill="#f2f2f2" /><rect x="90.6" y="336.45" width="2.4" height="1.65" fill="#f2f2f2" /><rect x="84.5" y="338.9" width="2.4" height="1.65" fill="#f2f2f2" /><rect x="87.55" y="338.9" width="2.4" height="1.65" fill="#f2f2f2" /><rect x="90.6" y="338.9" width="2.4" height="1.65" fill="#f2f2f2" /><rect x="70.7" y="347.3" width="6.6" height="6.6" fill="#fafafa" stroke="#9a9a9a" stroke-width="0.9" rx="0.8" /><rect x="71.6" y="351.2" width="4.8" height="1.9" fill="#e2e2e2" /><rect x="72.1" y="350.1" width="3.8" height="1" fill="#4a62b0" /><rect x="73.5" y="348.7" width="1" height="3.8" fill="#4a62b0" /><rect x="83.6" y="345.5" width="10.4" height="9.8" fill="#424242" /><rect x="84.5" y="347.8" width="2.4" height="1.65" fill="#f2f2f2" /><rect x="87.55" y="347.8" width="2.4" height="1.65" fill="#f2f2f2" /><rect x="90.6" y="347.8" width="2.4" height="1.65" fill="#f2f2f2" /><rect x="84.5" y="350.25" width="2.4" height="1.65" fill="#f2f2f2" /><rect x="87.55" y="350.25" width="2.4" height="1.65" fill="#f2f2f2" /><rect x="90.6" y="350.25" width="2.4" height="1.65" fill="#f2f2f2" /><rect x="84.5" y="352.7" width="2.4" height="1.65" fill="#f2f2f2" /><rect x="87.55" y="352.7" width="2.4" height="1.65" fill="#f2f2f2" /><rect x="90.6" y="352.7" width="2.4" height="1.65" fill="#f2f2f2" /><rect x="70.7" y="361.1" width="6.6" height="6.6" fill="#fafafa" stroke="#9a9a9a" stroke-width="0.9" rx="0.8" /><rect x="71.6" y="365" width="4.8" height="1.9" fill="#e2e2e2" /><rect x="72.1" y="363.9" width="3.8" height="1" fill="#4a62b0" /><rect x="73.5" y="362.5" width="1" height="3.8" fill="#4a62b0" /><rect x="83.6" y="359.3" width="10.4" height="9.8" fill="#424242" /><rect x="84.5" y="361.6" width="2.4" height="1.65" fill="#f2f2f2" /><rect x="87.55" y="361.6" width="2.4" height="1.65" fill="#f2f2f2" /><rect x="90.6" y="361.6" width="2.4" height="1.65" fill="#f2f2f2" /><rect x="84.5" y="364.05" width="2.4" height="1.65" fill="#f2f2f2" /><rect x="87.55" y="364.05" width="2.4" height="1.65" fill="#f2f2f2" /><rect x="90.6" y="364.05" width="2.4" height="1.65" fill="#f2f2f2" /><rect x="84.5" y="366.5" width="2.4" height="1.65" fill="#f2f2f2" /><rect x="87.55" y="366.5" width="2.4" height="1.65" fill="#f2f2f2" /><rect x="90.6" y="366.5" width="2.4" height="1.65" fill="#f2f2f2" /><rect x="70.7" y="374.9" width="6.6" height="6.6" fill="#fafafa" stroke="#9a9a9a" stroke-width="0.9" rx="0.8" /><rect x="71.6" y="378.8" width="4.8" height="1.9" fill="#e2e2e2" /><rect x="72.1" y="377.7" width="3.8" height="1" fill="#4a62b0" /><rect x="73.5" y="376.3" width="1" height="3.8" fill="#4a62b0" /><rect x="83.6" y="373.1" width="10.4" height="9.8" fill="#424242" /><rect x="84.5" y="375.4" width="2.4" height="1.65" fill="#f2f2f2" /><rect x="87.55" y="375.4" width="2.4" height="1.65" fill="#f2f2f2" /><rect x="90.6" y="375.4" width="2.4" height="1.65" fill="#f2f2f2" /><rect x="84.5" y="377.85" width="2.4" height="1.65" fill="#f2f2f2" /><rect x="87.55" y="377.85" width="2.4" height="1.65" fill="#f2f2f2" /><rect x="90.6" y="377.85" width="2.4" height="1.65" fill="#f2f2f2" /><rect x="84.5" y="380.3" width="2.4" height="1.65" fill="#f2f2f2" /><rect x="87.55" y="380.3" width="2.4" height="1.65" fill="#f2f2f2" /><rect x="90.6" y="380.3" width="2.4" height="1.65" fill="#f2f2f2" /><rect x="70.7" y="388.7" width="6.6" height="6.6" fill="#fafafa" stroke="#9a9a9a" stroke-width="0.9" rx="0.8" /><rect x="71.6" y="392.6" width="4.8" height="1.9" fill="#e2e2e2" /><rect x="72.1" y="391.5" width="3.8" height="1" fill="#4a62b0" /><rect x="73.5" y="390.1" width="1" height="3.8" fill="#4a62b0" /><rect x="83.6" y="386.9" width="10.4" height="9.8" fill="#424242" /><rect x="84.5" y="389.2" width="2.4" height="1.65" fill="#f2f2f2" /><rect x="87.55" y="389.2" width="2.4" height="1.65" fill="#f2f2f2" /><rect x="90.6" y="389.2" width="2.4" height="1.65" fill="#f2f2f2" /><rect x="84.5" y="391.65" width="2.4" height="1.65" fill="#f2f2f2" /><rect x="87.55" y="391.65" width="2.4" height="1.65" fill="#f2f2f2" /><rect x="90.6" y="391.65" width="2.4" height="1.65" fill="#f2f2f2" /><rect x="84.5" y="394.1" width="2.4" height="1.65" fill="#f2f2f2" /><rect x="87.55" y="394.1" width="2.4" height="1.65" fill="#f2f2f2" /><rect x="90.6" y="394.1" width="2.4" height="1.65" fill="#f2f2f2" /><rect x="70.7" y="402.5" width="6.6" height="6.6" fill="#fafafa" stroke="#9a9a9a" stroke-width="0.9" rx="0.8" /><rect x="71.6" y="406.4" width="4.8" height="1.9" fill="#e2e2e2" /><rect x="72.1" y="405.3" width="3.8" height="1" fill="#4a62b0" /><rect x="73.5" y="403.9" width="1" height="3.8" fill="#4a62b0" /><rect x="83.6" y="400.7" width="10.4" height="9.8" fill="#424242" /><rect x="84.5" y="403" width="2.4" height="1.65" fill="#f2f2f2" /><rect x="87.55" y="403" width="2.4" height="1.65" fill="#f2f2f2" /><rect x="90.6" y="403" width="2.4" height="1.65" fill="#f2f2f2" /><rect x="84.5" y="405.45" width="2.4" height="1.65" fill="#f2f2f2" /><rect x="87.55" y="405.45" width="2.4" height="1.65" fill="#f2f2f2" /><rect x="90.6" y="405.45" width="2.4" height="1.65" fill="#f2f2f2" /><rect x="84.5" y="407.9" width="2.4" height="1.65" fill="#f2f2f2" /><rect x="87.55" y="407.9" width="2.4" height="1.65" fill="#f2f2f2" /><rect x="90.6" y="407.9" width="2.4" height="1.65" fill="#f2f2f2" /><rect x="70.7" y="416.3" width="6.6" height="6.6" fill="#fafafa" stroke="#9a9a9a" stroke-width="0.9" rx="0.8" /><rect x="71.6" y="420.2" width="4.8" height="1.9" fill="#e2e2e2" /><rect x="72.1" y="419.1" width="3.8" height="1" fill="#4a62b0" /><rect x="73.5" y="417.7" width="1" height="3.8" fill="#4a62b0" /><rect x="83.6" y="414.5" width="10.4" height="9.8" fill="#424242" /><rect x="84.5" y="416.8" width="2.4" height="1.65" fill="#f2f2f2" /><rect x="87.55" y="416.8" width="2.4" height="1.65" fill="#f2f2f2" /><rect x="90.6" y="416.8" width="2.4" height="1.65" fill="#f2f2f2" /><rect x="84.5" y="419.25" width="2.4" height="1.65" fill="#f2f2f2" /><rect x="87.55" y="419.25" width="2.4" height="1.65" fill="#f2f2f2" /><rect x="90.6" y="419.25" width="2.4" height="1.65" fill="#f2f2f2" /><rect x="84.5" y="421.7" width="2.4" height="1.65" fill="#f2f2f2" /><rect x="87.55" y="421.7" width="2.4" height="1.65" fill="#f2f2f2" /><rect x="90.6" y="421.7" width="2.4" height="1.65" fill="#f2f2f2" /><rect x="70.7" y="430.1" width="6.6" height="6.6" fill="#fafafa" stroke="#9a9a9a" stroke-width="0.9" rx="0.8" /><rect x="71.6" y="434" width="4.8" height="1.9" fill="#e2e2e2" /><rect x="72.1" y="432.9" width="3.8" height="1" fill="#4a62b0" /><rect x="73.5" y="431.5" width="1" height="3.8" fill="#4a62b0" /><rect x="83.6" y="428.3" width="10.4" height="9.8" fill="#424242" /><rect x="84.5" y="430.6" width="2.4" height="1.65" fill="#f2f2f2" /><rect x="87.55" y="430.6" width="2.4" height="1.65" fill="#f2f2f2" /><rect x="90.6" y="430.6" width="2.4" height="1.65" fill="#f2f2f2" /><rect x="84.5" y="433.05" width="2.4" height="1.65" fill="#f2f2f2" /><rect x="87.55" y="433.05" width="2.4" height="1.65" fill="#f2f2f2" /><rect x="90.6" y="433.05" width="2.4" height="1.65" fill="#f2f2f2" /><rect x="84.5" y="435.5" width="2.4" height="1.65" fill="#f2f2f2" /><rect x="87.55" y="435.5" width="2.4" height="1.65" fill="#f2f2f2" /><rect x="90.6" y="435.5" width="2.4" height="1.65" fill="#f2f2f2" /><circle cx="85.9" cy="436" r="2.6" fill="#f6f6f6" stroke="#424242" stroke-width="0.9"/><path d="M85.9 434.6v1.5h1.2" fill="none" stroke="#424242" stroke-width="0.7" /><rect x="70.7" y="443.9" width="6.6" height="6.6" fill="#fafafa" stroke="#9a9a9a" stroke-width="0.9" rx="0.8" /><rect x="71.6" y="447.8" width="4.8" height="1.9" fill="#e2e2e2" /><rect x="72.1" y="446.7" width="3.8" height="1" fill="#4a62b0" /><rect x="73.5" y="445.3" width="1" height="3.8" fill="#4a62b0" /><rect x="83.6" y="442.1" width="10.4" height="9.8" fill="#424242" /><rect x="84.5" y="444.4" width="2.4" height="1.65" fill="#f2f2f2" /><rect x="87.55" y="444.4" width="2.4" height="1.65" fill="#f2f2f2" /><rect x="90.6" y="444.4" width="2.4" height="1.65" fill="#f2f2f2" /><rect x="84.5" y="446.85" width="2.4" height="1.65" fill="#f2f2f2" /><rect x="87.55" y="446.85" width="2.4" height="1.65" fill="#f2f2f2" /><rect x="90.6" y="446.85" width="2.4" height="1.65" fill="#f2f2f2" /><rect x="84.5" y="449.3" width="2.4" height="1.65" fill="#f2f2f2" /><rect x="87.55" y="449.3" width="2.4" height="1.65" fill="#f2f2f2" /><rect x="90.6" y="449.3" width="2.4" height="1.65" fill="#f2f2f2" /><rect x="70.7" y="457.7" width="6.6" height="6.6" fill="#fafafa" stroke="#9a9a9a" stroke-width="0.9" rx="0.8" /><rect x="71.6" y="461.6" width="4.8" height="1.9" fill="#e2e2e2" /><rect x="72.1" y="460.5" width="3.8" height="1" fill="#4a62b0" /><rect x="73.5" y="459.1" width="1" height="3.8" fill="#4a62b0" /><rect x="83.6" y="455.9" width="10.4" height="9.8" fill="#424242" /><rect x="84.5" y="458.2" width="2.4" height="1.65" fill="#f2f2f2" /><rect x="87.55" y="458.2" width="2.4" height="1.65" fill="#f2f2f2" /><rect x="90.6" y="458.2" width="2.4" height="1.65" fill="#f2f2f2" /><rect x="84.5" y="460.65" width="2.4" height="1.65" fill="#f2f2f2" /><rect x="87.55" y="460.65" width="2.4" height="1.65" fill="#f2f2f2" /><rect x="90.6" y="460.65" width="2.4" height="1.65" fill="#f2f2f2" /><rect x="84.5" y="463.1" width="2.4" height="1.65" fill="#f2f2f2" /><rect x="87.55" y="463.1" width="2.4" height="1.65" fill="#f2f2f2" /><rect x="90.6" y="463.1" width="2.4" height="1.65" fill="#f2f2f2" /><rect x="70.7" y="471.5" width="6.6" height="6.6" fill="#fafafa" stroke="#9a9a9a" stroke-width="0.9" rx="0.8" /><rect x="71.6" y="475.4" width="4.8" height="1.9" fill="#e2e2e2" /><rect x="72.1" y="474.3" width="3.8" height="1" fill="#4a62b0" /><rect x="73.5" y="472.9" width="1" height="3.8" fill="#4a62b0" /><rect x="83.6" y="469.7" width="10.4" height="9.8" fill="#424242" /><rect x="84.5" y="472" width="2.4" height="1.65" fill="#f2f2f2" /><rect x="87.55" y="472" width="2.4" height="1.65" fill="#f2f2f2" /><rect x="90.6" y="472" width="2.4" height="1.65" fill="#f2f2f2" /><rect x="84.5" y="474.45" width="2.4" height="1.65" fill="#f2f2f2" /><rect x="87.55" y="474.45" width="2.4" height="1.65" fill="#f2f2f2" /><rect x="90.6" y="474.45" width="2.4" height="1.65" fill="#f2f2f2" /><rect x="84.5" y="476.9" width="2.4" height="1.65" fill="#f2f2f2" /><rect x="87.55" y="476.9" width="2.4" height="1.65" fill="#f2f2f2" /><rect x="90.6" y="476.9" width="2.4" height="1.65" fill="#f2f2f2" /></svg>
<div style="left:238px;top:84px;width:404px;height:16px;background:#293955;"></div>
<div style="left:238px;top:84px;width:201px;height:16px;background:#fff29d;"></div>
<div style="left:439px;top:84px;width:203px;height:15px;background:#364e6f;"></div>
<div style="left:238px;top:98px;width:525px;height:2px;background:#fff29d;"></div>
<span style="left:241.5px;top:88px;font-size:10px;color:#1e1e1e;transform:scaleX(0.8728);">SQLQuery4.sql - de...tureWorks2022 (sa)*</span>
<span style="left:443.3px;top:88px;font-size:10px;color:#fff;transform:scaleX(0.8750);">SQLQuery1.sql - de...tureWorks2022 (sa)*</span>
<div style="left:238px;top:100px;width:525px;height:185px;background:#fff;"></div>
<div style="left:238px;top:100px;width:14px;height:185px;background:#e6e7e8;"></div>
<div style="left:254px;top:100px;width:4px;height:12px;background:#ffee62;"></div>
<div style="left:267px;top:100px;width:480px;height:11px;background:transparent;box-shadow:inset 0 0 0 1px #eaeaf0"></div>
<span style="left:268.3px;top:102px;font-size:9.2px;color:#0000ff;font-family:'Liberation Mono', monospace;transform:scaleX(0.9246);">KILL</span>
<span style="left:289.8px;top:102px;font-size:9.2px;color:#000;font-family:'Liberation Mono', monospace;transform:scaleX(0.8763);"> 58</span>
<span style="left:304.6px;top:102px;font-size:9.2px;color:#808080;font-family:'Liberation Mono', monospace;transform:scaleX(0.8700);">;</span>
<div style="left:748px;top:100px;width:15px;height:185px;background:#e8e8ec;"></div>
<div style="left:748px;top:100px;width:15px;height:13px;background:#e6edfb;box-shadow:inset 1px -1px 0 0 #9aa8c9"></div>
<div style="left:749px;top:126px;width:10px;height:137px;background:#c2c3c9;"></div>
<div style="left:749px;top:126px;width:3px;height:6px;background:#ffe84f;"></div>
<div style="left:748px;top:263px;width:15px;height:2px;background:#1b1bd6;"></div>
<div style="left:238px;top:285px;width:525px;height:13px;background:#e8e8ec;"></div>
<div style="left:239px;top:286px;width:46px;height:12px;background:#fff;box-shadow:inset 0 0 0 1px #c9d0e0"></div>
<span style="left:240.7px;top:289px;font-size:9px;color:#1e1e1e;transform:scaleX(0.9322);">100 %</span>
<div style="left:238px;top:298px;width:525px;height:183px;background:#f0f0f0;"></div>
<div style="left:294px;top:304px;width:61px;height:15px;background:#f3f3f3;box-shadow:inset 0 0 0 1px #e2e2e2"></div>
<span style="left:262px;top:306px;font-size:9px;color:#1e1e1e;transform:scaleX(0.8596);">Results</span>
<span style="left:314.8px;top:307px;font-size:9px;color:#1e1e1e;transform:scaleX(0.8774);">Messages</span>
<div style="left:243px;top:318px;width:517px;height:138px;background:#b2b2b2;"></div>
<div style="left:244px;top:319px;width:516px;height:137px;background:#fff;"></div>
<div style="left:759px;top:319px;width:1px;height:137px;background:#e3e3e3;"></div>
<div style="left:244px;top:334px;width:265px;height:1px;background:#eeeeee;"></div>
<div style="left:244px;top:349px;width:265px;height:1px;background:#eeeeee;"></div>
<div style="left:244px;top:363px;width:265px;height:1px;background:#eeeeee;"></div>
<div style="left:244px;top:378px;width:265px;height:1px;background:#eeeeee;"></div>
<div style="left:244px;top:392px;width:265px;height:1px;background:#eeeeee;"></div>
<div style="left:244px;top:407px;width:265px;height:1px;background:#eeeeee;"></div>
<div style="left:244px;top:422px;width:265px;height:1px;background:#eeeeee;"></div>
<div style="left:244px;top:436px;width:265px;height:1px;background:#eeeeee;"></div>
<div style="left:267px;top:319px;width:1px;height:118px;background:#eeeeee;"></div>
<div style="left:391px;top:319px;width:1px;height:118px;background:#eeeeee;"></div>
<div style="left:508px;top:319px;width:1px;height:118px;background:#eeeeee;"></div>
<div style="left:392px;top:334px;width:117px;height:15px;background:#a6cbef;outline:1px dotted #333;outline-offset:-1px"></div>
<span style="left:271.2px;top:323px;font-size:9px;color:#1e1e1e;transform:scaleX(0.9199);">ActiveTransaction</span>
<span style="left:395.8px;top:323px;font-size:9px;color:#1e1e1e;transform:scaleX(0.8504);">Details</span>
<span style="left:247.3px;top:337px;font-size:9px;color:#1e1e1e;transform:scaleX(0.8700);">1</span>
<span style="left:272px;top:337px;font-size:9px;color:#1e1e1e;transform:scaleX(0.9067);">OLDACT_SPID</span>
<span style="left:397px;top:337px;font-size:9px;color:#1e1e1e;transform:scaleX(0.8786);">58</span>
<span style="left:247.3px;top:352px;font-size:9px;color:#1e1e1e;transform:scaleX(0.8700);">2</span>
<span style="left:272px;top:352px;font-size:9px;color:#1e1e1e;transform:scaleX(0.9068);">OLDACT_UID</span>
<span style="left:397px;top:352px;font-size:9px;color:#1e1e1e;transform:scaleX(0.7485);">-1</span>
<span style="left:247.3px;top:367px;font-size:9px;color:#1e1e1e;transform:scaleX(0.8700);">3</span>
<span style="left:272px;top:367px;font-size:9px;color:#1e1e1e;transform:scaleX(0.9139);">OLDACT_NAME</span>
<span style="left:397px;top:367px;font-size:9px;color:#1e1e1e;transform:scaleX(0.8903);">user_transaction</span>
<span style="left:247.3px;top:381px;font-size:9px;color:#1e1e1e;transform:scaleX(0.8700);">4</span>
<span style="left:272px;top:381px;font-size:9px;color:#1e1e1e;transform:scaleX(0.9133);">OLDACT_RECOVERYUNITID</span>
<span style="left:397px;top:381px;font-size:9px;color:#1e1e1e;transform:scaleX(0.8700);">0</span>
<span style="left:247.3px;top:396px;font-size:9px;color:#1e1e1e;transform:scaleX(0.8700);">5</span>
<span style="left:272px;top:396px;font-size:9px;color:#1e1e1e;transform:scaleX(0.9182);">OLDACT_LSN</span>
<span style="left:397px;top:396px;font-size:9px;color:#1e1e1e;transform:scaleX(0.9070);">(68:16936:1)</span>
<span style="left:247.3px;top:410px;font-size:9px;color:#1e1e1e;transform:scaleX(0.8700);">6</span>
<span style="left:272px;top:410px;font-size:9px;color:#1e1e1e;transform:scaleX(0.9271);">OLDACT_STARTTIME</span>
<span style="left:397px;top:410px;font-size:9px;color:#1e1e1e;transform:scaleX(0.9177);">Apr 12 2024  7:35:11:090PM</span>
<span style="left:247.3px;top:425px;font-size:9px;color:#1e1e1e;transform:scaleX(0.8700);">7</span>
<span style="left:272px;top:425px;font-size:9px;color:#1e1e1e;transform:scaleX(0.9148);">OLDACT_SID</span>
<span style="left:397px;top:425px;font-size:9px;color:#1e1e1e;transform:scaleX(0.8576);">0x01</span>
<div style="left:243px;top:456px;width:517px;height:21px;background:#bcc4d8;"></div>
<div style="left:244px;top:457px;width:515px;height:19px;background:#d6dbe9;"></div>
<span style="left:248.7px;top:465px;font-size:8.6px;color:#1c2a4c;font-family:'DejaVu Sans', 'Liberation Sans', sans-serif;transform:scaleX(0.8289);-webkit-text-stroke:0;">MAX:</span>
<span style="left:272.6px;top:465px;font-size:8.6px;color:#1c2a4c;font-family:'DejaVu Sans', 'Liberation Sans', sans-serif;font-weight:700;transform:scaleX(0.8700);">2</span>
<span style="left:299.7px;top:465px;font-size:8.6px;color:#1c2a4c;font-family:'DejaVu Sans', 'Liberation Sans', sans-serif;transform:scaleX(0.8972);-webkit-text-stroke:0;">MIN:</span>
<span style="left:322px;top:465px;font-size:8.6px;color:#1c2a4c;font-family:'DejaVu Sans', 'Liberation Sans', sans-serif;font-weight:700;transform:scaleX(0.8700);">2</span>
<span style="left:350px;top:465px;font-size:8.6px;color:#1c2a4c;font-family:'DejaVu Sans', 'Liberation Sans', sans-serif;transform:scaleX(0.8572);-webkit-text-stroke:0;">AVG:</span>
<span style="left:372px;top:465px;font-size:8.6px;color:#b4b8c4;font-family:'DejaVu Sans', 'Liberation Sans', sans-serif;transform:scaleX(0.8276);">NaN</span>
<span style="left:400.75px;top:465px;font-size:8.6px;color:#1c2a4c;font-family:'DejaVu Sans', 'Liberation Sans', sans-serif;transform:scaleX(0.8272);-webkit-text-stroke:0;">SUM:</span>
<span style="left:423.7px;top:465px;font-size:8.6px;color:#b4b8c4;font-family:'DejaVu Sans', 'Liberation Sans', sans-serif;transform:scaleX(0.8386);">NaN</span>
<span style="left:452px;top:465px;font-size:8.6px;color:#1c2a4c;font-family:'DejaVu Sans', 'Liberation Sans', sans-serif;transform:scaleX(0.9055);-webkit-text-stroke:0;">COUNT:</span>
<span style="left:486.8px;top:465px;font-size:8.6px;color:#1c2a4c;font-family:'DejaVu Sans', 'Liberation Sans', sans-serif;font-weight:700;transform:scaleX(0.8700);">1</span>
<span style="left:513.9px;top:465px;font-size:8.6px;color:#1c2a4c;font-family:'DejaVu Sans', 'Liberation Sans', sans-serif;transform:scaleX(0.9350);-webkit-text-stroke:0;">DISTINCT:</span>
<span style="left:557.9px;top:465px;font-size:8.6px;color:#1c2a4c;font-family:'DejaVu Sans', 'Liberation Sans', sans-serif;font-weight:700;transform:scaleX(0.8700);">1</span>
<div style="left:238px;top:481px;width:525px;height:17px;background:#f0e68c;"></div>
<span style="left:257px;top:486px;font-size:10px;color:#1e1e1e;transform:scaleX(0.8989);">Query executed successfully.</span>
<span style="left:406.6px;top:486px;font-size:10px;color:#1e1e1e;transform:scaleX(0.8235);">demo\SQLEXPRESS02 (16.0 RTM)</span>
<span style="left:548.6px;top:486px;font-size:10px;color:#1e1e1e;transform:scaleX(0.8161);">sa (59)</span>
<span style="left:584.7px;top:486px;font-size:10px;color:#1e1e1e;transform:scaleX(0.8929);">AdventureWorks2022</span>
<span style="left:680.5px;top:486px;font-size:10px;color:#1e1e1e;transform:scaleX(0.8295);">00:00:00</span>
<span style="left:723px;top:486px;font-size:10px;color:#1e1e1e;transform:scaleX(0.8726);">7 rows</span>
<div style="left:402px;top:484px;width:1px;height:12px;background:#f8f3c8;"></div>
<div style="left:403px;top:484px;width:1px;height:12px;background:#d3ca80;"></div>
<div style="left:545px;top:484px;width:1px;height:12px;background:#f8f3c8;"></div>
<div style="left:546px;top:484px;width:1px;height:12px;background:#d3ca80;"></div>
<div style="left:581px;top:484px;width:1px;height:12px;background:#f8f3c8;"></div>
<div style="left:582px;top:484px;width:1px;height:12px;background:#d3ca80;"></div>
<div style="left:676px;top:484px;width:1px;height:12px;background:#f8f3c8;"></div>
<div style="left:677px;top:484px;width:1px;height:12px;background:#d3ca80;"></div>
<div style="left:718px;top:484px;width:1px;height:12px;background:#f8f3c8;"></div>
<div style="left:719px;top:484px;width:1px;height:12px;background:#d3ca80;"></div>
<svg style="left:236px;top:80px" width="532" height="420" viewBox="236 80 532 420"><path d="M414.2 91.8h2M416.2 90v3.6M416.4 90.4h3.2v2.6h-3.2" fill="none" stroke="#3b3b3b" stroke-width="0.8" /><rect x="416.4" y="92.2" width="3.4" height="0.9" fill="#3b3b3b" /><path d="M428.6 88.8l6 6M434.6 88.8l-6 6" fill="none" stroke="#2b2b2b" stroke-width="1.1" /><path d="M755 90.4h6l-3 3.2z" fill="#e8ebf3" /><rect x="751" y="105" width="9" height="0.9" fill="#1e1e1e" /><rect x="751" y="106.8" width="9" height="0.9" fill="#1e1e1e" /><rect x="755.1" y="102" width="0.9" height="9" fill="#1e1e1e" /><path d="M753.6 103l1.95-1.9 1.95 1.9zM753.6 109.9l1.95 1.9 1.95-1.9z" fill="#1e1e1e" /><path d="M751.8 121.2l3.5-4 3.5 4z" fill="#868999" /><path d="M751.8 277.2l3.5 4 3.5-4z" fill="#868999" /><path d="M292.8 289.6l-3.3 2.8 3.3 2.8z" fill="#c8c9d2" /><path d="M740.2 289.2l3.3 2.8-3.3 2.8z" fill="#c8c9d2" /><path d="M278.3 291.2h4l-2 2.4z" fill="#1e1e1e" /><rect x="246.6" y="304.6" width="10" height="8.8" fill="#424242" /><rect x="247.5" y="306.9" width="2.3" height="1.45" fill="#f2f2f2" /><rect x="250.45" y="306.9" width="2.3" height="1.45" fill="#f2f2f2" /><rect x="253.4" y="306.9" width="2.3" height="1.45" fill="#f2f2f2" /><rect x="247.5" y="309.05" width="2.3" height="1.45" fill="#f2f2f2" /><rect x="250.45" y="309.05" width="2.3" height="1.45" fill="#f2f2f2" /><rect x="253.4" y="309.05" width="2.3" height="1.45" fill="#f2f2f2" /><rect x="247.5" y="311.2" width="2.3" height="1.45" fill="#f2f2f2" /><rect x="250.45" y="311.2" width="2.3" height="1.45" fill="#f2f2f2" /><rect x="253.4" y="311.2" width="2.3" height="1.45" fill="#f2f2f2" /><rect x="304.4" y="305.4" width="5" height="9.6" fill="#f6f6f6" stroke="#424242" stroke-width="0.9" /><rect x="305.6" y="307" width="2.6" height="0.8" fill="#424242" /><rect x="305.6" y="308.8" width="2.6" height="0.8" fill="#424242" /><rect x="307.2" y="310.4" width="1.4" height="2.6" fill="#424242" /><path d="M298.8 309h3.6l1.4 1.4v5h-5z" fill="#f6f6f6" stroke="#424242" stroke-width="0.9" /><rect x="300" y="312" width="2.6" height="0.7" fill="#424242" /><rect x="300" y="313.6" width="2.6" height="0.7" fill="#424242" /><circle cx="247.6" cy="489.7" r="5.2" fill="#2e8b2e"/><circle cx="247.6" cy="489.7" r="4.3" fill="#3aa03a"/><path d="M245 489.8l1.9 2 3.4-4.2" fill="none" stroke="#fff" stroke-width="1.5" /></svg>
<div style="left:0px;top:503px;width:768px;height:18px;background:#007acc;"></div>
<span style="left:21.7px;top:509px;font-size:10px;color:#fff;transform:scaleX(0.8337);">Ready</span>
<span style="left:170.5px;top:509px;font-size:10px;color:#fff;transform:scaleX(0.8321);">Ln 1</span>
<span style="left:312.2px;top:509px;font-size:10px;color:#fff;transform:scaleX(0.8733);">Col 2</span>
<span style="left:416.6px;top:509px;font-size:10px;color:#fff;transform:scaleX(0.8037);">INS</span>
<svg style="left:0;top:503px" width="768" height="18" viewBox="0 503 768 18"><path d="M5.4 509.4h9.2l-2 6.8h-9.2z" fill="none" stroke="#fff" stroke-width="1"/><rect x="763.5" y="511.5" width="1" height="1" fill="#6fb3e6"/><rect x="763.5" y="513.5" width="1" height="1" fill="#6fb3e6"/><rect x="763.5" y="515.5" width="1" height="1" fill="#6fb3e6"/><rect x="761.5" y="513.5" width="1" height="1" fill="#6fb3e6"/><rect x="761.5" y="515.5" width="1" height="1" fill="#6fb3e6"/><rect x="759.5" y="515.5" width="1" height="1" fill="#6fb3e6"/></svg>
</div></body></html>
